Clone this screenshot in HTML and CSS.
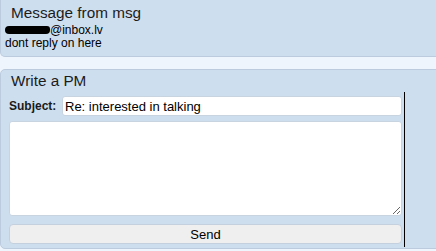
FILE: index.html
```html
<!DOCTYPE html>
<html>
<head>
<meta charset="utf-8">
<link rel="stylesheet" href="styles.css">
</head>
<body>
<div class="panel panel-top">
  <div class="title">Message from msg</div>
  <div class="line"><span class="redact"></span>@inbox.lv</div>
  <div class="line">dont reply on here</div>
</div>
<div class="panel panel-pm">
  <div class="title">Write a PM</div>
  <div class="form">
    <div class="subject-row">
      <label class="subject-label">Subject:</label>
      <input class="subject-input" type="text" value="Re: interested in talking">
    </div>
    <textarea class="body-input"></textarea>
    <button class="send">Send</button>
  </div>
</div>
</body>
</html>
```
FILE: styles.css
```css
html, body {
  margin: 0;
  padding: 0;
}
body {
  background: #eef5fd;
  font-family: "Liberation Sans", Arial, sans-serif;
  color: #000;
  width: 436px;
  height: 251px;
  overflow: hidden;
}
.panel {
  background: #cddeef;
  border: 1px solid #bccbdd;
  margin-right: -12px;
}
.panel-top {
  border-top: 0;
  border-radius: 0 0 5px 5px;
  padding: 4px 4px 6px 4px;
}
.title {
  font-size: 15.3px;
  line-height: 18px;
  color: #1c1c1c;
  padding-left: 6px;
}
.panel-top .title {
  margin-bottom: 2px;
}
.line {
  font-size: 12px;
  line-height: 13px;
}
.redact {
  display: inline-block;
  width: 45px;
  height: 8px;
  background: #000;
  border-radius: 4px 3px 4px 4px;
  vertical-align: 0px;
}
.panel-pm {
  margin-top: 12px;
  border-radius: 5px;
  padding: 2px 0 1px 0;
}
.panel-pm .title {
  padding-left: 10px;
  margin-bottom: 2px;
}
.form {
  width: 393px;
  padding: 4px 2px 3px 8px;
  border-right: 1px solid #000;
  display: flex;
  flex-direction: column;
}
.subject-row {
  display: flex;
  align-items: center;
  height: 20px;
}
.subject-label {
  width: 53px;
  font-weight: bold;
  font-size: 12px;
  color: #1a1a1a;
}
.subject-input {
  flex: 1;
  box-sizing: border-box;
  height: 20px;
  margin: 0;
  border: 1px solid #c8d4e0;
  border-radius: 3px;
  background: #fff;
  padding: 0 2px;
  font-family: "Liberation Sans", Arial, sans-serif;
  font-size: 13px;
  color: #000;
  outline: none;
}
.body-input {
  box-sizing: border-box;
  margin: 5px 0 0 0;
  height: 95px;
  width: 100%;
  border: 1px solid #c8d4e0;
  border-radius: 3px;
  background: #fff;
  padding: 2px;
  font-family: "Liberation Sans", Arial, sans-serif;
  font-size: 13px;
  outline: none;
  display: block;
}
.send {
  box-sizing: border-box;
  margin: 8px 0 0 0;
  height: 20px;
  width: 100%;
  border: 1px solid #c4d0dd;
  border-radius: 4px;
  background: #efefef;
  font-family: "Liberation Sans", Arial, sans-serif;
  font-size: 13px;
  color: #000;
  padding: 0;
}
```
